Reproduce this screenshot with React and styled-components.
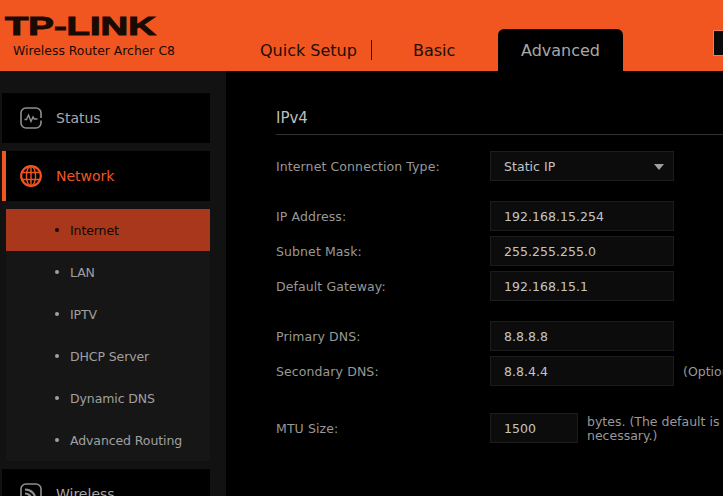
import styled, { createGlobalStyle } from "styled-components";

const GlobalStyle = createGlobalStyle`
  html, body {
    margin: 0;
    padding: 0;
    background: #000;
  }
  body {
    font-family: "DejaVu Sans", Verdana, sans-serif;
  }
`;

const Page = styled.div`
  width: 723px;
  height: 496px;
  overflow: hidden;
  background: #000;
`;

const Header = styled.header`
  height: 71px;
  background: #f15620;
  display: flex;
  align-items: flex-end;
`;

const Brand = styled.div`
  width: 260px;
  height: 71px;
  flex-shrink: 0;
  position: relative;
`;

const Logo = styled.div`
  position: absolute;
  left: 5px;
  top: 11px;
  font-family: "Liberation Sans", Arial, sans-serif;
  font-weight: 700;
  font-size: 25px;
  line-height: 30px;
  color: #1a0a04;
  -webkit-text-stroke: 1px #1a0a04;
  transform: scaleX(1.53);
  transform-origin: left center;
  white-space: nowrap;
`;

const Model = styled.div`
  position: absolute;
  left: 13px;
  top: 44px;
  font-size: 12.4px;
  line-height: 14px;
  color: #1a0a04;
  white-space: nowrap;
`;

const Tabs = styled.nav`
  display: flex;
  align-items: flex-end;
  height: 42px;
  flex: 1;
  position: relative;
`;

const Tab = styled.div`
  font-size: 16px;
  line-height: 43px;
  height: 42px;
  color: ${(props) => (props.active ? "#a8a8a8" : "#1d0c05")};
  background: ${(props) => (props.active ? "#000" : "transparent")};
  border-radius: ${(props) => (props.active ? "6px 6px 0 0" : "0")};
  width: ${(props) => props.width}px;
  text-align: ${(props) => (props.active ? "center" : "left")};
  white-space: nowrap;
`;

const Divider = styled.span`
  display: inline-block;
  width: 1px;
  height: 20px;
  background: #1d0c05;
  margin-left: 14px;
  vertical-align: -4px;
`;

const CornerButton = styled.div`
  position: absolute;
  left: 453px;
  top: 1px;
  width: 30px;
  height: 24px;
  background: #0a0a0a;
  border: 1px solid #f47a5c;
`;

const Body = styled.div`
  display: flex;
  height: 425px;
`;

const Sidebar = styled.aside`
  width: 226px;
  flex-shrink: 0;
  background: #121212;
  padding: 22px 16px 0 2px;
  box-sizing: border-box;
  display: flex;
  flex-direction: column;
  gap: 8px;
`;

const MenuItem = styled.div`
  height: 50px;
  flex-shrink: 0;
  background: #000;
  display: flex;
  align-items: center;
  padding-left: ${(props) => (props.active ? "14px" : "18px")};
  border-left: ${(props) => (props.active ? "4px solid #f15620" : "0")};
  color: ${(props) => (props.active ? "#f15620" : "#a8a8a8")};
  font-size: 14px;
  gap: 14px;
`;

const IconWrap = styled.svg`
  width: 22px;
  height: 22px;
  flex-shrink: 0;
  display: block;
`;

const SubList = styled.ul`
  list-style: none;
  margin: 0 0 0 4px;
  padding: 0;
  background: #161616;
  flex-shrink: 0;
`;

const SubItem = styled.li`
  height: 42px;
  line-height: 43px;
  font-size: 12.5px;
  padding-left: 64px;
  position: relative;
  color: ${(props) => (props.active ? "#120602" : "#a0a0a0")};
  background: ${(props) => (props.active ? "#a9371b" : "transparent")};
  letter-spacing: -0.1px;

  &::before {
    content: "";
    position: absolute;
    left: 49px;
    top: 19px;
    width: 4px;
    height: 4px;
    border-radius: 50%;
    background: ${(props) => (props.active ? "#120602" : "#a0a0a0")};
  }
`;

const Main = styled.main`
  flex: 1;
  min-width: 0;
  padding: 34px 0 0 50px;
  background: #000;
`;

const SectionTitle = styled.h2`
  margin: 0 0 16px;
  width: 460px;
  height: 29px;
  font-size: 15px;
  font-weight: 400;
  line-height: 26px;
  color: #bdbdbd;
  border-bottom: 1px solid #333;
`;

const Group = styled.div`
  display: flex;
  flex-direction: column;
  gap: 5px;
  margin-bottom: ${(props) => props.after}px;
`;

const Row = styled.div`
  display: flex;
  align-items: center;
  height: 30px;
  width: 460px;
`;

const Label = styled.label`
  width: 214px;
  flex-shrink: 0;
  font-size: 12.5px;
  color: #989898;
  white-space: nowrap;
  letter-spacing: 0.1px;
`;

const Field = styled.div`
  width: ${(props) => props.width || 184}px;
  height: 30px;
  box-sizing: border-box;
  flex-shrink: 0;
  background: #0c0c0c;
  border: 1px solid #1c1c1c;
  padding: 1px 0 0 13px;
  font-size: 12.5px;
  line-height: 28px;
  letter-spacing: 0.05px;
  color: #c4c4c4;
  display: flex;
  justify-content: space-between;
  align-items: center;
`;

const Caret = styled.span`
  width: 0;
  height: 0;
  margin-right: 9px;
  border-left: 5px solid transparent;
  border-right: 5px solid transparent;
  border-top: 6px solid #a0a0a0;
`;

const Note = styled.div`
  margin-left: 9px;
  padding-top: 1px;
  font-size: 12.5px;
  line-height: 14px;
  color: #989898;
  white-space: nowrap;
`;

function StatusIcon() {
  return (
    <IconWrap viewBox="0 0 22 22" fill="none" stroke="#8f8f8f">
      <path
        d="M21 13.5V16a5 5 0 0 1-5 5H6a5 5 0 0 1-5-5V6a5 5 0 0 1 5-5h10a5 5 0 0 1 5 5v5"
        strokeWidth="1.6"
      />
      <path d="M4.5 12.5h2l2-4.5 2.5 6.5 2-4.5 1.3 2h3.2" strokeWidth="1.4" />
    </IconWrap>
  );
}

function GlobeIcon() {
  return (
    <IconWrap viewBox="0 0 22 22" fill="none" stroke="#f15620">
      <circle cx="11" cy="11" r="9.8" strokeWidth="2.2" />
      <ellipse cx="11" cy="11" rx="4.6" ry="9.8" strokeWidth="1.4" />
      <path d="M11 1v20M2 7.5h18M2 14.5h18" strokeWidth="1.4" />
    </IconWrap>
  );
}

function WirelessIcon() {
  return (
    <IconWrap viewBox="0 0 22 22" fill="none" stroke="#8f8f8f">
      <rect x="1" y="1" width="20" height="20" rx="5" strokeWidth="1.6" />
      <path d="M5 6.5c6 0 10.5 4.5 10.5 10.5M5 10.5c3.700 0 6.500 2.800 6.500 6.500" strokeWidth="2.2" />
      <circle cx="6.5" cy="15.500" r="1.800" fill="#8f8f8f" stroke="none" />
    </IconWrap>
  );
}

const subItems = ["Internet", "LAN", "IPTV", "DHCP Server", "Dynamic DNS", "Advanced Routing"];

export default function App() {
  return (
    <Page>
      <GlobalStyle />
      <Header>
        <Brand>
          <Logo>TP-LINK</Logo>
          <Model>Wireless Router Archer C8</Model>
        </Brand>
        <Tabs>
          <Tab width={153}>
            Quick Setup<Divider />
          </Tab>
          <Tab width={85}>Basic</Tab>
          <Tab width={125} active>
            Advanced
          </Tab>
          <CornerButton />
        </Tabs>
      </Header>
      <Body>
        <Sidebar>
          <MenuItem>
            <StatusIcon />
            Status
          </MenuItem>
          <MenuItem active>
            <GlobeIcon />
            Network
          </MenuItem>
          <SubList>
            {subItems.map((name, i) => (
              <SubItem key={name} active={i === 0}>
                {name}
              </SubItem>
            ))}
          </SubList>
          <MenuItem>
            <WirelessIcon />
            Wireless
          </MenuItem>
        </Sidebar>
        <Main>
          <SectionTitle>IPv4</SectionTitle>
          <Group after={20}>
            <Row>
              <Label>Internet Connection Type:</Label>
              <Field>
                Static IP
                <Caret />
              </Field>
            </Row>
          </Group>
          <Group after={20}>
            <Row>
              <Label>IP Address:</Label>
              <Field>192.168.15.254</Field>
            </Row>
            <Row>
              <Label>Subnet Mask:</Label>
              <Field>255.255.255.0</Field>
            </Row>
            <Row>
              <Label>Default Gateway:</Label>
              <Field>192.168.15.1</Field>
            </Row>
          </Group>
          <Group after={27}>
            <Row>
              <Label>Primary DNS:</Label>
              <Field>8.8.8.8</Field>
            </Row>
            <Row>
              <Label>Secondary DNS:</Label>
              <Field>8.8.4.4</Field>
              <Note>(Optional)</Note>
            </Row>
          </Group>
          <Row>
            <Label>MTU Size:</Label>
            <Field width={88}>1500</Field>
            <Note>
              bytes. (The default is 1500, do not change unless
              <br />
              necessary.)
            </Note>
          </Row>
        </Main>
      </Body>
    </Page>
  );
}
